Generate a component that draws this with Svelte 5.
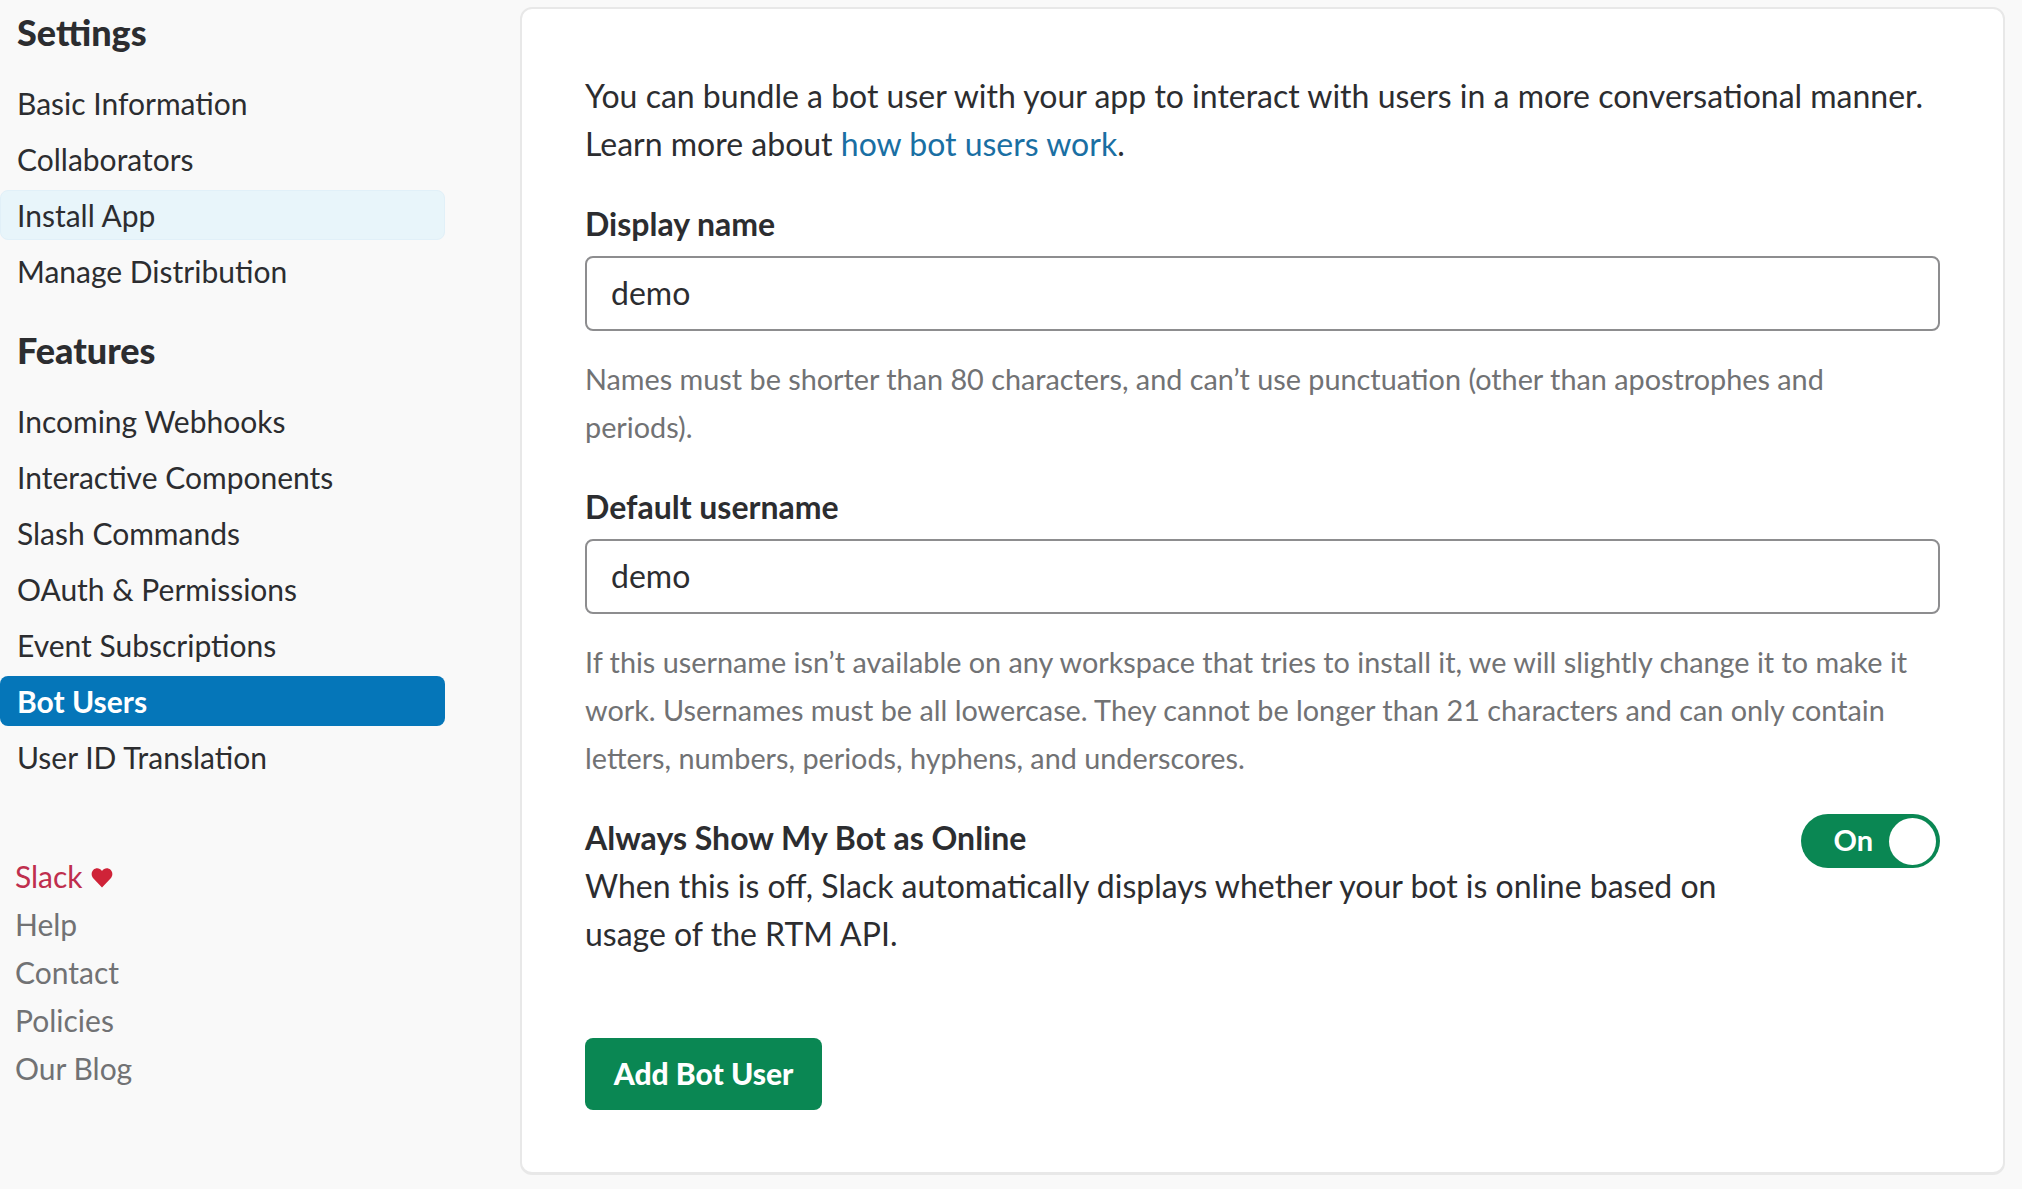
<script>
	const settings = ['Basic Information', 'Collaborators', 'Install App', 'Manage Distribution'];
	const features = [
		'Incoming Webhooks',
		'Interactive Components',
		'Slash Commands',
		'OAuth & Permissions',
		'Event Subscriptions',
		'Bot Users',
		'User ID Translation'
	];
	const footer = ['Help', 'Contact', 'Policies', 'Our Blog'];
</script>

<div class="page">
	<aside class="sidebar">
		<h2 class="first">Settings</h2>
		<ul>
			{#each settings as item}
				<li class:hover={item === 'Install App'}>{item}</li>
			{/each}
		</ul>
		<h2>Features</h2>
		<ul>
			{#each features as item}
				<li class:active={item === 'Bot Users'}>{item}</li>
			{/each}
		</ul>
		<div class="footer">
			<div class="slack">
				Slack
				<svg viewBox="0 0 24 22" width="22" height="20" aria-hidden="true">
					<path d="M12 21.5 2.6 11.6C-.2 8.6.1 4.4 2.6 2 5.3-.6 9.6-.2 12 3.2 14.4-.2 18.700-.6 21.400 2c2.500 2.400 2.800 6.600 0 9.600z" />
				</svg>
			</div>
			{#each footer as item}
				<div>{item}</div>
			{/each}
		</div>
	</aside>

	<main class="card">
		<p>
			You can bundle a bot user with your app to interact with users in a more conversational manner.
			Learn more about <a href="#bot">how bot users work</a>.
		</p>

		<label for="display">Display name</label>
		<input id="display" value="demo" />
		<p class="hint">Names must be shorter than 80 characters, and can’t use punctuation (other than apostrophes and periods).</p>

		<label for="username">Default username</label>
		<input id="username" value="demo" />
		<p class="hint">
			If this username isn’t available on any workspace that tries to install it, we will slightly change it to make it work.
			Usernames must be all lowercase. They cannot be longer than 21 characters and can only contain letters, numbers, periods,
			hyphens, and underscores.
		</p>

		<div class="online">
			<div class="online-text">
				<strong>Always Show My Bot as Online</strong>
				<span>When this is off, Slack automatically displays whether your bot is online based on usage of the RTM API.</span>
			</div>
			<div class="toggle">
				<span>On</span>
				<i></i>
			</div>
		</div>

		<button>Add Bot User</button>
	</main>
</div>

<style>
	:global(body) {
		margin: 0;
		background: #f9f9f9;
	}

	.page {
		display: flex;
		align-items: flex-start;
		height: 1189px;
		overflow: hidden;
		box-sizing: border-box;
		padding: 7px 17px 0 0;
		font-family: Lato, 'Liberation Sans', sans-serif;
		font-size: 32px;
		line-height: 48px;
		color: #2c2d30;
		font-variant-ligatures: common-ligatures;
		text-rendering: optimizeLegibility;
	}

	.sidebar {
		width: 445px;
		flex-shrink: 0;
		margin-right: 75px;
		font-size: 30px;
	}

	h2 {
		margin: 30px 0 22px 17px;
		font-size: 36px;
		line-height: 48px;
		font-weight: 900;
	}

	h2.first {
		margin-top: 1px;
	}

	ul {
		list-style: none;
		margin: 0;
		padding: 0;
		display: flex;
		flex-direction: column;
		gap: 6px;
	}

	li {
		box-sizing: border-box;
		height: 50px;
		padding-left: 17px;
		border: 1px solid transparent;
		border-width: 1px 0;
		border-radius: 8px;
		white-space: nowrap;
	}

	li.hover {
		padding-left: 16px;
		background: #e8f5fa;
		border: 1px solid #e1f0f8;
	}

	li.active {
		background: #0576b9;
		color: #fff;
		font-weight: 700;
	}

	.footer {
		margin-top: 70px;
		padding-left: 15px;
		color: #717274;
	}

	.slack {
		color: #bf2f4e;
		display: flex;
		align-items: center;
		gap: 8px;
	}

	.slack svg {
		fill: #cf2338;
		margin-top: 3px;
	}

	.card {
		flex: 1;
		box-sizing: border-box;
		height: 1168px;
		padding: 64px 63px;
		background: #fff;
		border-radius: 12px;
		border: 2px solid #e8e8e8;
		border-width: 2px 2px 3px;
	}

	p {
		margin: 0;
	}

	p:first-child {
		margin-top: -1px;
	}

	a {
		color: #1a6fa3;
		text-decoration: none;
	}

	label {
		display: block;
		margin: 32px 0 8px;
		font-weight: 700;
	}

	input {
		display: block;
		box-sizing: border-box;
		width: 100%;
		height: 75px;
		padding: 0 24px 2px;
		font: inherit;
		color: inherit;
		border: 2px solid #8d8d8f;
		border-radius: 8px;
		outline: none;
	}

	.hint {
		margin-top: 24px;
		padding-right: 24px;
		color: #717274;
		font-size: 28.800px;
	}

	.online {
		display: flex;
		justify-content: space-between;
		align-items: flex-start;
		margin-top: 32px;
	}

	.online-text {
		width: 1150px;
	}

	.online-text strong {
		display: block;
	}

	.online-text span {
		display: block;
	}

	.toggle {
		box-sizing: border-box;
		width: 139px;
		height: 54px;
		border-radius: 27px;
		background: #0a8753;
		color: #fff;
		font-size: 29px;
		font-weight: 700;
		display: flex;
		align-items: center;
		justify-content: flex-end;
		padding-right: 4px;
		gap: 16px;
	}

	.toggle span {
		margin-top: -2px;
	}

	.toggle i {
		width: 47px;
		height: 47px;
		border-radius: 50%;
		background: #fff;
	}

	button {
		display: block;
		margin-top: 80px;
		width: 237px;
		height: 72px;
		padding: 0 0 3px;
		border: none;
		border-radius: 8px;
		background: #0a8753;
		color: #fff;
		font: inherit;
		font-size: 30px;
		font-weight: 900;
	}
</style>
